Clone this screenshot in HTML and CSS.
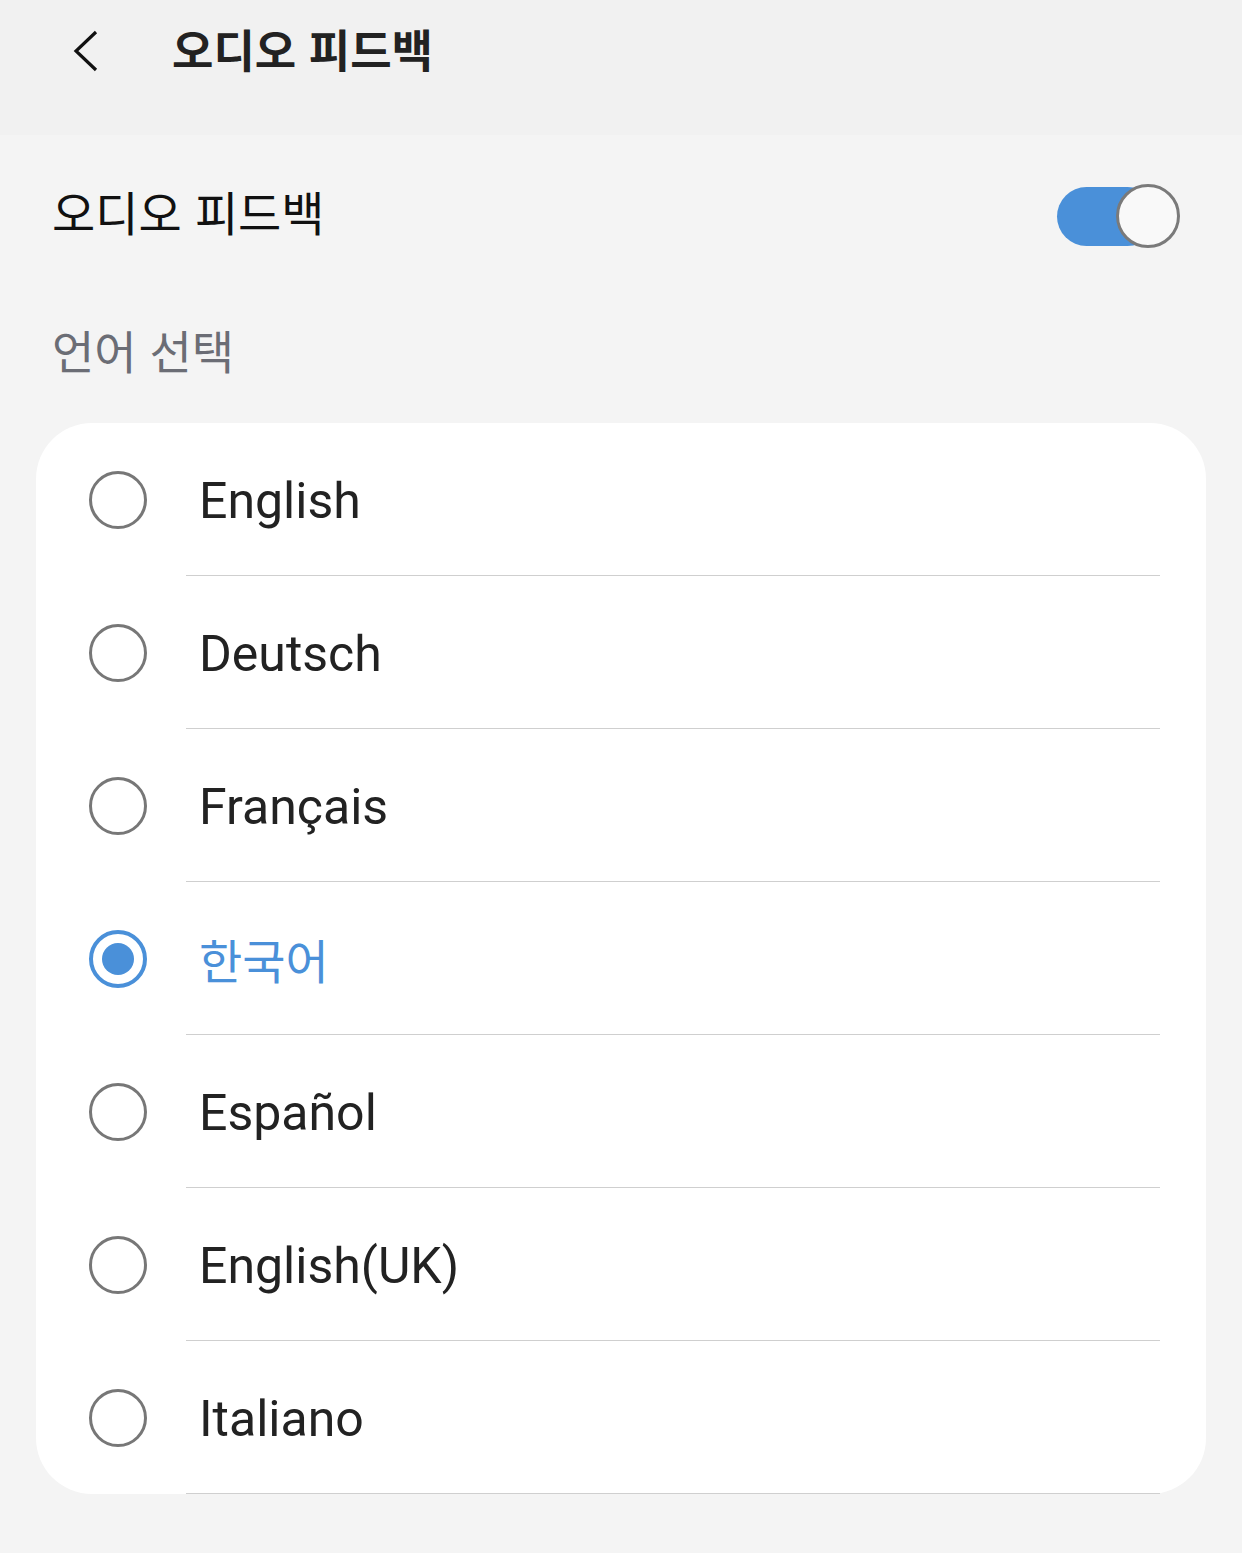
FILE: index.html
```html
<!DOCTYPE html>
<html lang="ko">
<head>
<meta charset="utf-8">
<link rel="stylesheet" href="styles.css">
</head>
<body>
<header class="appbar">
  <svg class="back" width="30" height="44" viewBox="0 0 30 44"><polyline points="25,3 5,22 25,41" fill="none" stroke="#111" stroke-width="3.2"/></svg>
  <h1 class="title">오디오 피드백</h1>
</header>
<main class="content">
  <div class="switch-row">
    <span class="switch-label">오디오 피드백</span>
    <span class="toggle"><span class="track"></span><span class="thumb"></span></span>
  </div>
  <div class="section-label">언어 선택</div>
  <div class="card">
    <div class="row"><span class="radio"></span><span class="label">English</span></div>
    <div class="row"><span class="radio"></span><span class="label">Deutsch</span></div>
    <div class="row"><span class="radio"></span><span class="label">Français</span></div>
    <div class="row selected"><span class="radio"></span><span class="label">한국어</span></div>
    <div class="row"><span class="radio"></span><span class="label">Español</span></div>
    <div class="row"><span class="radio"></span><span class="label">English(UK)</span></div>
    <div class="row"><span class="radio"></span><span class="label">Italiano</span></div>
  </div>
</main>
</body>
</html>
```
FILE: styles.css
```css
html, body { margin: 0; padding: 0; }
body {
  background: #f4f4f4;
  font-family: Roboto, "Noto Sans CJK KR", sans-serif;
  width: 1242px;
  height: 1553px;
  overflow: hidden;
}
.appbar {
  height: 135px;
  background: #f1f1f1;
  display: flex;
  align-items: flex-start;
  padding-left: 71px;
  box-sizing: border-box;
}
.back { margin-top: 29px; }
.title {
  margin: 16px 0 0 71px;
  font-family: "Noto Sans CJK KR", sans-serif;
  font-weight: 700;
  font-size: 45px;
  line-height: 66px;
  color: #222;
}
.content { display: flex; flex-direction: column; }
.switch-row {
  height: 160px;
  display: flex;
  align-items: center;
  justify-content: space-between;
  padding: 0 62px 0 52px;
  box-sizing: border-box;
}
.switch-label {
  font-family: "Noto Sans CJK KR", sans-serif;
  font-size: 47px;
  color: #111;
  margin-top: -10px;
}
.toggle {
  position: relative;
  width: 123px;
  height: 64px;
  margin-top: 2px;
}
.track {
  position: absolute;
  left: 0; top: 3px;
  width: 100px; height: 59px;
  border-radius: 30px;
  background: #4a90d9;
}
.thumb {
  position: absolute;
  right: 0; top: 0;
  width: 58px; height: 58px;
  border: 3px solid #7a7a7a;
  border-radius: 50%;
  background: #f9f9f9;
}
.section-label {
  font-family: "Noto Sans CJK KR", sans-serif;
  font-size: 46px;
  color: #6b6d75;
  padding: 24px 0 0 52px;
  box-sizing: border-box;
  height: 128px;
  line-height: 60px;
}
.card {
  margin: 0 36px;
  background: #fff;
  border-radius: 56px;
  display: flex;
  flex-direction: column;
}
.row {
  display: flex;
  align-items: stretch;
  height: 153px;
}
.radio {
  width: 58px;
  height: 58px;
  box-sizing: border-box;
  border: 3px solid #777;
  border-radius: 50%;
  align-self: center;
  margin: 0 39px 0 53px;
  position: relative;
}
.label {
  flex: 1;
  display: flex;
  align-items: center;
  padding: 4px 0 0 13px;
  margin-right: 46px;
  border-bottom: 1px solid #cfcfcf;
  font-size: 50px;
  color: #222;
}
.selected .radio {
  border: 4px solid #4a90d9;
}
.selected .radio::after {
  content: "";
  position: absolute;
  left: 9px; top: 9px;
  width: 32px; height: 32px;
  border-radius: 50%;
  background: #4a90d9;
}
.selected .label {
  color: #4a90d9;
  font-family: "Noto Sans CJK KR", sans-serif;
  font-size: 47px;
  padding-top: 0;
}
```
